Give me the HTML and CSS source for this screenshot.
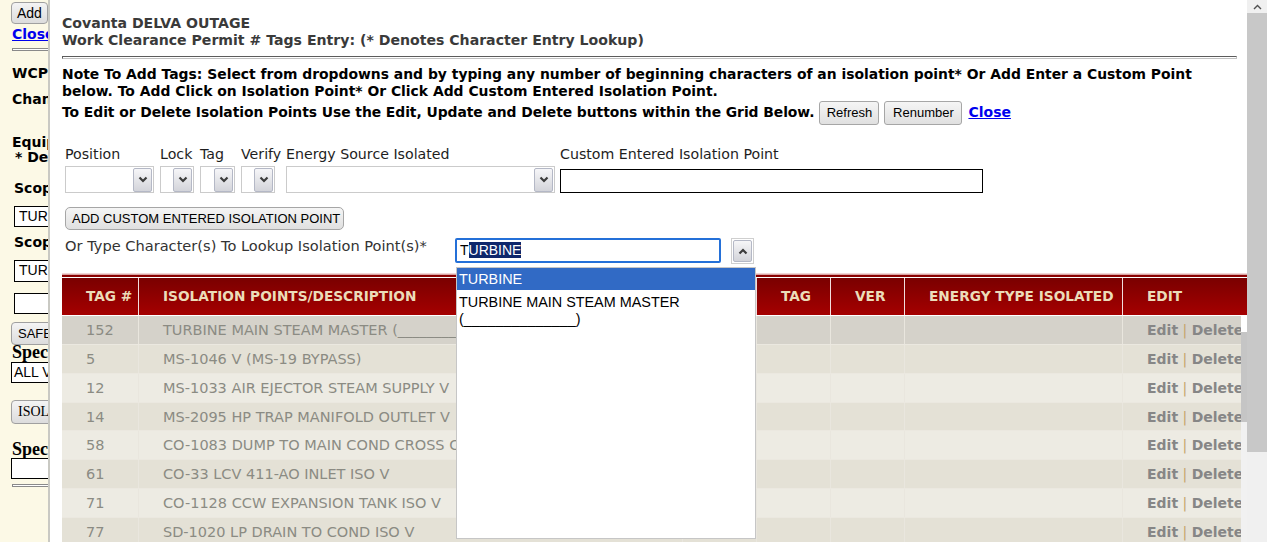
FILE: index.html
```html
<!DOCTYPE html>
<html>
<head>
<meta charset="utf-8">
<title>Tags Entry</title>
<link rel="stylesheet" href="styles.css">
</head>
<body>
<div class="page">
  <aside class="bgpage">
    <button class="bg-btn add">Add</button>
    <a class="bg-close" href="#">Close</a>
    <div class="bg-rule r1"></div>
    <div class="bg-lbl wcp">WCP #</div>
    <div class="bg-lbl chan">Change</div>
    <div class="bg-lbl equip">Equipment</div>
    <div class="bg-lbl den">* Denotes</div>
    <div class="bg-lbl scope1">Scope</div>
    <div class="bg-input in1">TURBINE</div>
    <div class="bg-lbl scope2">Scope</div>
    <div class="bg-input in2">TURBINE</div>
    <div class="bg-input in3"></div>
    <button class="bg-btn safe">SAFETY</button>
    <div class="bg-serif spec1">Special</div>
    <div class="bg-select">ALL VALVES</div>
    <button class="bg-btn isol">ISOLATION</button>
    <div class="bg-serif spec2">Special</div>
    <div class="bg-input in4"></div>
    <div class="bg-rule r2"></div>
  </aside>

  <div class="modal">
    <main class="frame">
      <div class="title">Covanta DELVA OUTAGE<br>Work Clearance Permit # Tags Entry: (* Denotes Character Entry Lookup)</div>
      <div class="rule"></div>

      <div class="note">
        <div class="note-line">Note To Add Tags: Select from dropdowns and by typing any number of beginning characters of an isolation point* Or Add Enter a Custom Point</div>
        <div class="note-line">below. To Add Click on Isolation Point* Or Click Add Custom Entered Isolation Point.</div>
        <div class="note-actions">
          <span class="note-last">To Edit or Delete Isolation Points Use the Edit, Update and Delete buttons within the Grid Below.</span>
          <button class="btn refresh">Refresh</button>
          <button class="btn renumber">Renumber</button>
          <a class="link-close" href="#">Close</a>
        </div>
      </div>

      <div class="form">
        <div class="lbl">Position</div>
        <div class="lbl">Lock</div>
        <div class="lbl">Tag</div>
        <div class="lbl">Verify</div>
        <div class="lbl">Energy Source Isolated</div>
        <div class="lbl">Custom Entered Isolation Point</div>

        <div class="sel w-pos"><span class="sel-btn"><svg width="10" height="7" viewBox="0 0 10 7"><path d="M1.5 1.5 L5 5 L8.5 1.5" fill="none" stroke="#3c3c3c" stroke-width="2.2"/></svg></span></div>
        <div class="sel w-lock"><span class="sel-btn"><svg width="10" height="7" viewBox="0 0 10 7"><path d="M1.5 1.5 L5 5 L8.5 1.5" fill="none" stroke="#3c3c3c" stroke-width="2.2"/></svg></span></div>
        <div class="sel w-tag"><span class="sel-btn"><svg width="10" height="7" viewBox="0 0 10 7"><path d="M1.5 1.5 L5 5 L8.5 1.5" fill="none" stroke="#3c3c3c" stroke-width="2.2"/></svg></span></div>
        <div class="sel w-ver"><span class="sel-btn"><svg width="10" height="7" viewBox="0 0 10 7"><path d="M1.5 1.5 L5 5 L8.5 1.5" fill="none" stroke="#3c3c3c" stroke-width="2.2"/></svg></span></div>
        <div class="sel w-energy"><span class="sel-btn"><svg width="10" height="7" viewBox="0 0 10 7"><path d="M1.5 1.5 L5 5 L8.5 1.5" fill="none" stroke="#3c3c3c" stroke-width="2.2"/></svg></span></div>
        <div class="custom-input"></div>
      </div>

      <button class="btn add-custom">ADD CUSTOM ENTERED ISOLATION POINT</button>

      <div class="lookup">
        <div class="lookup-lbl">Or Type Character(s) To Lookup Isolation Point(s)*</div>
        <div class="lookup-input">T<span class="selected">URBINE</span></div>
        <div class="up-box"><span class="sel-btn up"><svg width="10" height="7" viewBox="0 0 10 7"><path d="M1.5 5.5 L5 2 L8.5 5.5" fill="none" stroke="#3c3c3c" stroke-width="2.2"/></svg></span></div>
        <div class="dropdown">
          <div class="dd-item active">TURBINE</div>
          <div class="dd-item">TURBINE MAIN STEAM MASTER (______________)</div>
        </div>
      </div>

      <div class="grid">
        <div class="grid-top"></div>
        <div class="ghead">
          <div class="hc">TAG #</div>
          <div class="hc">ISOLATION POINTS/DESCRIPTION</div>
          <div class="hc">LOCK</div>
          <div class="hc">TAG</div>
          <div class="hc">VER</div>
          <div class="hc">ENERGY TYPE ISOLATED</div>
          <div class="hc last">EDIT</div>
        </div>
        <div class="gbody">
          <div class="rows">
            <div class="grow sel-row"><div class="c">152</div><div class="c">TURBINE MAIN STEAM MASTER (______________)</div><div class="c"></div><div class="c"></div><div class="c"></div><div class="c"></div><div class="c ed"><b>Edit</b> <i>|</i> <b>Delete</b></div></div>
            <div class="grow odd"><div class="c">5</div><div class="c">MS-1046 V (MS-19 BYPASS)</div><div class="c"></div><div class="c"></div><div class="c"></div><div class="c"></div><div class="c ed"><b>Edit</b> <i>|</i> <b>Delete</b></div></div>
            <div class="grow even"><div class="c">12</div><div class="c">MS-1033 AIR EJECTOR STEAM SUPPLY V</div><div class="c"></div><div class="c"></div><div class="c"></div><div class="c"></div><div class="c ed"><b>Edit</b> <i>|</i> <b>Delete</b></div></div>
            <div class="grow odd"><div class="c">14</div><div class="c">MS-2095 HP TRAP MANIFOLD OUTLET V</div><div class="c"></div><div class="c"></div><div class="c"></div><div class="c"></div><div class="c ed"><b>Edit</b> <i>|</i> <b>Delete</b></div></div>
            <div class="grow even"><div class="c">58</div><div class="c">CO-1083 DUMP TO MAIN COND CROSS CONNECT V</div><div class="c"></div><div class="c"></div><div class="c"></div><div class="c"></div><div class="c ed"><b>Edit</b> <i>|</i> <b>Delete</b></div></div>
            <div class="grow odd"><div class="c">61</div><div class="c">CO-33 LCV 411-AO INLET ISO V</div><div class="c"></div><div class="c"></div><div class="c"></div><div class="c"></div><div class="c ed"><b>Edit</b> <i>|</i> <b>Delete</b></div></div>
            <div class="grow even"><div class="c">71</div><div class="c">CO-1128 CCW EXPANSION TANK ISO V</div><div class="c"></div><div class="c"></div><div class="c"></div><div class="c"></div><div class="c ed"><b>Edit</b> <i>|</i> <b>Delete</b></div></div>
            <div class="grow odd"><div class="c">77</div><div class="c">SD-1020 LP DRAIN TO COND ISO V</div><div class="c"></div><div class="c"></div><div class="c"></div><div class="c"></div><div class="c ed"><b>Edit</b> <i>|</i> <b>Delete</b></div></div>
          </div>
          <div class="inner-scroll">
            <div class="is-arrow"></div>
            <div class="is-thumb"></div>
          </div>
        </div>
      </div>
    </main>
    <div class="vscroll">
      <div class="vs-arrow"><svg width="9" height="6" viewBox="0 0 9 6"><path d="M1 5 L4.5 1.5 L8 5" fill="none" stroke="#505050" stroke-width="1.4"/></svg></div>
      <div class="vs-thumb"></div>
    </div>
  </div>
</div>
</body>
</html>
```

FILE: styles.css
```css
* { box-sizing: border-box; }
html, body { margin: 0; padding: 0; }
body {
  width: 1267px;
  height: 542px;
  overflow: hidden;
  background: #fff;
  font-family: "DejaVu Sans", Verdana, sans-serif;
  font-size: 13px;
  color: #000;
}
.page { display: flex; height: 542px; }

/* ---------- background page strip ---------- */
.bgpage {
  width: 48px;
  flex: none;
  background: #fcf9e6;
  overflow: hidden;
  padding-left: 11px;
  white-space: nowrap;
}
.bgpage > * { display: block; }
.bg-btn {
  font-family: "Liberation Sans", Arial, sans-serif;
  font-size: 14px;
  color: #000;
  height: 22px;
  padding: 0 5px;
  border: 1px solid #a0a0a0;
  border-radius: 4px;
  background: linear-gradient(#f4f4f4, #dcdcdc);
  white-space: nowrap;
  text-align: left;
}
.bg-btn.add { margin-top: 2px; width: 37px; }
.bg-close {
  margin-top: 2px;
  margin-left: 1px;
  font-weight: bold;
  font-size: 14px;
  line-height: 16px;
  color: #0000ee;
  text-decoration: underline;
}
.bg-rule {
  margin-left: 1px;
  width: 60px;
  height: 3px;
  border: 1px solid #8a8a8a;
  background: #fff;
}
.bg-rule.r1 { margin-top: 6px; }
.bg-rule.r2 { margin-top: 5px; }
.bg-lbl { font-weight: bold; font-size: 14px; line-height: 16px; margin-left: 1px; }
.wcp { margin-top: 14px; }
.chan { margin-top: 10px; }
.equip { margin-top: 27px; }
.den { margin-top: -1px; margin-left: 4px; }
.scope1 { margin-top: 15px; margin-left: 3px; }
.scope2 { margin-top: 7px; margin-left: 3px; }
.bg-input {
  margin-left: 3px;
  width: 60px;
  height: 21px;
  border: 1px solid #000;
  background: #fff;
  font-family: "Liberation Sans", Arial, sans-serif;
  font-size: 14px;
  line-height: 19px;
  padding-left: 4px;
}
.in1 { margin-top: 10px; }
.in2 { margin-top: 10px; height: 22px; }
.in3 { margin-top: 11px; }
.bg-btn.safe { margin-top: 8px; height: 23px; font-size: 13px; padding: 0 6px; }
.bg-serif {
  margin-left: 1px;
  font-family: "Liberation Serif", "Times New Roman", serif;
  font-weight: bold;
  font-size: 18px;
  line-height: 16px;
}
.spec1 { margin-top: -1px; }
.bg-select {
  margin-top: 2px;
  width: 60px;
  height: 21px;
  border: 1px solid #000;
  background: #fff;
  font-family: "Liberation Sans", Arial, sans-serif;
  font-size: 14px;
  line-height: 19px;
  padding-left: 2px;
}
.bg-btn.isol {
  margin-top: 17px;
  height: 24px;
  font-family: "Liberation Serif", "Times New Roman", serif;
  font-size: 14px;
  padding: 0 6px;
}
.spec2 { margin-top: 17px; }
.in4 { margin-top: 1px; margin-left: 0; }

/* ---------- modal frame ---------- */
.modal {
  flex: 1;
  min-width: 0;
  display: flex;
  border-left: 2px solid #c9c9c3;
}
.frame {
  flex: 1;
  min-width: 0;
  overflow: hidden;
  padding: 15px 0 0 12px;
  background: #fff;
}
.title {
  font-weight: bold;
  font-size: 14.1px;
  color: #3a3a3a;
  line-height: 17px;
  white-space: nowrap;
}
.rule {
  margin: 7px 10px 0 0;
  height: 3px;
  border: 1px solid;
  border-color: #5c5c5c #c2c2c2 #c2c2c2 #5c5c5c;
}
.note {
  margin-top: 7px;
  font-weight: bold;
  font-size: 13.9px;
  line-height: 17px;
  white-space: nowrap;
}
.note-last { letter-spacing: -0.06px; }
.note-actions {
  display: flex;
  align-items: center;
  height: 25px;
}
.btn {
  font-family: "Liberation Sans", Arial, sans-serif;
  font-size: 13px;
  font-weight: normal;
  color: #000;
  height: 24px;
  border: 1px solid #a6a6a6;
  border-radius: 3px;
  background: linear-gradient(#f5f5f5, #e0e0e0);
  padding: 0 6px;
  white-space: nowrap;
}
.btn.refresh { margin-left: 5px; width: 60px; }
.btn.renumber { margin-left: 5px; width: 78px; }
.link-close {
  margin-left: 6px;
  font-size: 14px;
  color: #0000ee;
  text-decoration: underline;
  font-weight: bold;
}

.form {
  margin: 21px 0 0 3px;
  display: grid;
  grid-template-columns: 95px 40px 41px 45px 274px 423px;
  row-gap: 4px;
  align-items: start;
}
.lbl {
  font-size: 14.2px;
  line-height: 16px;
  color: #1e1e1e;
  white-space: nowrap;
}
.sel {
  height: 27px;
  border: 1px solid #cbcbcb;
  background: #fff;
  display: flex;
  justify-content: flex-end;
  align-items: center;
  padding-right: 1px;
}
.w-pos { width: 89px; }
.w-lock { width: 34px; }
.w-tag { width: 35px; }
.w-ver { width: 34px; }
.w-energy { width: 269px; }
.sel-btn {
  width: 19px;
  height: 24px;
  border: 1px solid #b4b8c6;
  border-radius: 2px;
  background: linear-gradient(#f6f6f8, #d3d4da);
  display: flex;
  align-items: center;
  justify-content: center;
}
.custom-input {
  margin-top: 3px;
  width: 423px;
  height: 24px;
  border: 1px solid #000;
  background: #fff;
}

.btn.add-custom {
  display: block;
  margin: 14px 0 0 3px;
  width: 279px;
  height: 23px;
  border-radius: 5px;
  padding: 0 6px;
  text-align: left;
}

.lookup {
  position: relative;
  display: flex;
  align-items: flex-start;
  margin: 8px 0 0 3px;
  height: 26px;
}
.lookup-lbl {
  width: 390px;
  flex: none;
  font-size: 14.6px;
  line-height: 16px;
  color: #333;
  white-space: nowrap;
}
.lookup-input {
  width: 266px;
  height: 25px;
  border: 2px solid #2470d8;
  border-radius: 2px;
  font-family: "Liberation Sans", Arial, sans-serif;
  font-size: 14px;
  line-height: 21px;
  padding-left: 3px;
  white-space: nowrap;
}
.selected {
  background: #0e276b;
  color: #fff;
}
.up-box {
  margin-left: 10px;
  width: 23px;
  height: 26px;
  border: 1px solid #cfcfcf;
  display: flex;
  align-items: center;
  justify-content: center;
}
.sel-btn.up { width: 19px; height: 22px; }
.dropdown {
  position: absolute;
  left: 391px;
  top: 29px;
  width: 300px;
  height: 272px;
  border: 1px solid #c6c6c6;
  background: #fff;
  z-index: 5;
  font-family: "Liberation Sans", Arial, sans-serif;
  font-size: 14.4px;
}
.dd-item {
  padding: 2px 4px 0 2px;
  line-height: 17px;
  color: #000;
}
.dd-item.active {
  height: 22px;
  padding-top: 0;
  line-height: 22px;
  background: #316ac5;
  color: #fff;
  margin-bottom: 2px;
}

/* ---------- grid ---------- */
.grid { margin-top: 9px; }
.grid-top {
  height: 5px;
  background: linear-gradient(#f0d6d6 0 1px, #d9a3a3 1px 2px, #8a0000 2px 4px, #fff 4px);
}
.ghead {
  display: grid;
  grid-template-columns: 77px 544px 74px 74px 74px 218px 1fr;
  height: 38px;
  background: linear-gradient(#7a0000, #a50000);
  border-bottom: 1px solid #fff;
}
.hc {
  border-right: 1px solid #f1dede;
  padding-left: 24px;
  font-size: 13.7px;
  line-height: 37px;
  font-weight: bold;
  color: #ecdcb9;
  white-space: nowrap;
  overflow: hidden;
}
.hc.last { border-right: none; }
.gbody { display: flex; height: 230px; }
.rows { flex: 1; min-width: 0; overflow: hidden; }
.grow {
  display: grid;
  grid-template-columns: 77px 544px 74px 74px 74px 218px 118px;
  height: 28.86px;
  border-bottom: 1px solid #ebe8e0;
}
.grow.sel-row { background: #d5d2ca; }
.grow.odd { background: #e4e1d6; }
.grow.even { background: #edebe3; }
.c {
  border-right: 1px solid #e9e6de;
  padding-left: 24px;
  font-size: 14.5px;
  line-height: 28px;
  color: #8b8b83;
  white-space: nowrap;
  overflow: hidden;
}
.c.ed { border-right: none; font-size: 14px; padding-left: 24px; }
.c.ed b { color: #868686; }
.c.ed i { font-style: normal; color: #c4a36c; }
.inner-scroll {
  width: 6px;
  flex: none;
  background: #f1f1f1;
  display: flex;
  flex-direction: column;
}
.is-arrow { height: 16px; background: #fff; }
.is-thumb { height: 90px; background: #c5c5c5; }

/* ---------- outer scrollbar ---------- */
.vscroll {
  width: 20px;
  flex: none;
  background: #f0f0f0;
  display: flex;
  flex-direction: column;
}
.vs-arrow {
  height: 13px;
  background: #f0f0f0;
  display: flex;
  align-items: center;
  justify-content: center;
}
.vs-thumb {
  height: 439px;
  background: #c8c8c8;
}
```
